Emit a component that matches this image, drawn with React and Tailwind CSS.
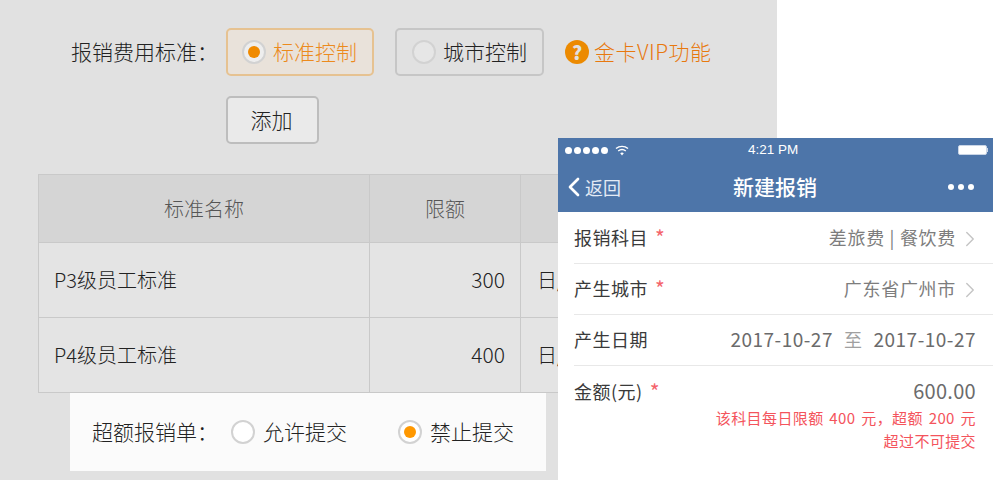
import { ChevronRight, ChevronLeft } from "lucide-react";

function Radio({ checked, dot = "bg-[#f08a00]", bg = "bg-[#f1f1f1]" }) {
  return (
    <span className={`flex h-[24px] w-[24px] shrink-0 items-center justify-center rounded-full border-2 border-[#d2d2d2] ${bg}`}>
      {checked && <span className={`h-[12px] w-[12px] rounded-full ${dot}`} />}
    </span>
  );
}

function Row({ label, star, children }) {
  return (
    <div className="flex h-[51px] items-center justify-between border-b border-[#e8e8e8] pb-[2px] pr-[17px]">
      <span className="flex items-center text-[18px] tracking-[0.5px] text-[#3a3a3a]">
        {label}
        {star && <span className="ml-[7px] text-[21px] leading-none text-[#f4646c]">*</span>}
      </span>
      {children}
    </div>
  );
}

function Phone() {
  return (
    <div className="absolute left-[558px] top-[138px] h-[342px] w-[435px] bg-white font-normal">
      <div className="h-[74px] bg-[#4d75a9] text-white">
        <div className="flex h-[24px] items-center justify-between pl-[7px] pr-[5px]">
          <div className="flex items-center gap-[2px]">
            <span className="h-[7px] w-[7px] rounded-full bg-white" />
            <span className="h-[7px] w-[7px] rounded-full bg-white" />
            <span className="h-[7px] w-[7px] rounded-full bg-white" />
            <span className="h-[7px] w-[7px] rounded-full bg-white" />
            <span className="h-[7px] w-[7px] rounded-full bg-white" />
            <svg width="14" height="11" viewBox="0 0 14 11" fill="none" stroke="white" strokeWidth="1.4" className="ml-[5px]">
              <path d="M1 3.6C4.4 .6 9.6 .6 13 3.6" />
              <path d="M3.2 6C5.4 4.2 8.6 4.2 10.8 6" />
              <path d="M7 10.6 5.2 8.2C6.2 7.4 7.8 7.4 8.8 8.2Z" fill="white" stroke="none" />
            </svg>
          </div>
          <span className="absolute left-[190px] text-[13.5px] font-['Liberation_Sans',sans-serif]">4:21 PM</span>
          <div className="flex items-center">
            <span className="h-[10px] w-[29px] rounded-[2px] border border-[#c9d5e6] bg-white" />
            <span className="h-[4px] w-[1px] bg-[#c9d5e6]" />
          </div>
        </div>
        <div className="relative flex h-[50px] items-center justify-center">
          <div className="absolute left-[8px] flex items-center">
            <ChevronLeft size={32} strokeWidth={2} className="ml-[-8px] mr-[-5px]" />
            <span className="text-[18px] text-[#e4ebf5]">返回</span>
          </div>
          <span className="ml-[-1px] text-[21px] font-medium">新建报销</span>
          <div className="absolute right-[19px] flex gap-[4px]">
            <span className="h-[6px] w-[6px] rounded-full bg-white" />
            <span className="h-[6px] w-[6px] rounded-full bg-white" />
            <span className="h-[6px] w-[6px] rounded-full bg-white" />
          </div>
        </div>
      </div>
      <div className="ml-[16px] pt-[1px]">
        <Row label="报销科目" star>
          <span className="flex items-center text-[18px] tracking-[0.7px] text-[#7d7d7d]">
            差旅费 | 餐饮费
            <ChevronRight size={26} strokeWidth={1.3} className="ml-[1px] mr-[-7px] mt-[4px] text-[#c4c4c4]" />
          </span>
        </Row>
        <Row label="产生城市" star>
          <span className="flex items-center text-[18px] tracking-[0.7px] text-[#7d7d7d]">
            广东省广州市
            <ChevronRight size={26} strokeWidth={1.3} className="ml-[1px] mr-[-7px] mt-[4px] text-[#c4c4c4]" />
          </span>
        </Row>
        <Row label="产生日期">
          <span className="flex items-center text-[19px] tracking-[0.5px] text-[#6b6b6b]">
            2017-10-27
            <span className="mx-[11px] text-[18px] text-[#a0a0a0]">至</span>
            2017-10-27
          </span>
        </Row>
        <div className="pr-[17px] pt-[10px]">
          <div className="flex items-center justify-between">
            <span className="flex items-center text-[18px] tracking-[0.5px] text-[#3a3a3a]">
              金额(元)<span className="ml-[7px] text-[21px] leading-none text-[#f4646c]">*</span>
            </span>
            <span className="text-[20px] tracking-[0.3px] text-[#6b6b6b]">600.00</span>
          </div>
          <p className="text-right text-[15px] leading-[23px] tracking-[0.4px] text-[#f4545c] [word-spacing:2px]">
            该科目每日限额 400 元，超额 200 元
            <br />
            超过不可提交
          </p>
        </div>
      </div>
    </div>
  );
}

export default function App() {
  return (
    <div className="relative h-[480px] w-[993px] overflow-hidden bg-white font-['Noto_Sans_CJK_SC','Noto_Sans',sans-serif] font-light">
      <div className="h-[480px] w-[777px] bg-[#e1e1e1] pt-[28px]">
        <div className="flex items-center text-[21px]">
          <span className="ml-[71px] w-[155px] text-[#222]">报销费用标准：</span>
          <div className="flex h-[48px] w-[148px] items-center gap-[7px] rounded-[5px] border-2 border-[#e6c291] bg-[#e9e2da] pl-[14px] text-[#ec8a1d]">
            <Radio checked bg="bg-[#eeeeee]" />
            标准控制
          </div>
          <div className="ml-[21px] flex h-[48px] w-[149px] items-center gap-[7px] rounded-[5px] border-2 border-[#c6c6c6] pl-[15px] text-[#222]">
            <Radio bg="bg-[#e6e6e6]" />
            城市控制
          </div>
          <span className="ml-[21px] flex h-[24px] w-[24px] items-center justify-center rounded-full bg-[#ec8a00] text-[19px] font-extrabold text-[#e1e1e1]">?</span>
          <span className="ml-[5px] tracking-[0.5px] text-[#e8780e]">金卡VIP功能</span>
        </div>
        <button className="ml-[226px] mt-[20px] h-[48px] w-[93px] rounded-[5px] border-2 border-[#bdbdbd] bg-[#eaeaea] pr-[2px] text-[21px] text-[#222]">添加</button>
        <div className="ml-[38px] mt-[30px] w-[739px] border-l border-t border-[#c9c9c9] text-[20px]">
          <div className="flex h-[68px] border-b border-[#c9c9c9] bg-[#d5d5d5] text-[#555]">
            <div className="flex w-[331px] items-center justify-center border-r border-[#c9c9c9]">标准名称</div>
            <div className="flex w-[151px] items-center justify-center border-r border-[#c9c9c9]">限额</div>
          </div>
          <div className="flex h-[75px] border-b border-[#c9c9c9] bg-[#e4e4e4] text-[#222]">
            <div className="flex w-[331px] items-center border-r border-[#c9c9c9] pl-[15px]">P3级员工标准</div>
            <div className="flex w-[151px] items-center justify-end border-r border-[#c9c9c9] pr-[15px] text-[21px]">300</div>
            <div className="flex items-center pl-[16px]">日/</div>
          </div>
          <div className="flex h-[75px] border-b border-[#c9c9c9] bg-[#e4e4e4] text-[#222]">
            <div className="flex w-[331px] items-center border-r border-[#c9c9c9] pl-[15px]">P4级员工标准</div>
            <div className="flex w-[151px] items-center justify-end border-r border-[#c9c9c9] pr-[15px] text-[21px]">400</div>
            <div className="flex items-center pl-[16px]">日/</div>
          </div>
        </div>
        <div className="ml-[70px] flex h-[78px] w-[476px] items-center bg-[#fbfbfb] pl-[22px] text-[21px] text-[#222]">
          <span className="w-[139px]">超额报销单：</span>
          <Radio bg="bg-white" />
          <span className="ml-[8px] w-[135px]">允许提交</span>
          <Radio checked dot="bg-[#ff9800]" bg="bg-white" />
          <span className="ml-[8px]">禁止提交</span>
        </div>
      </div>
      <Phone />
    </div>
  );
}
